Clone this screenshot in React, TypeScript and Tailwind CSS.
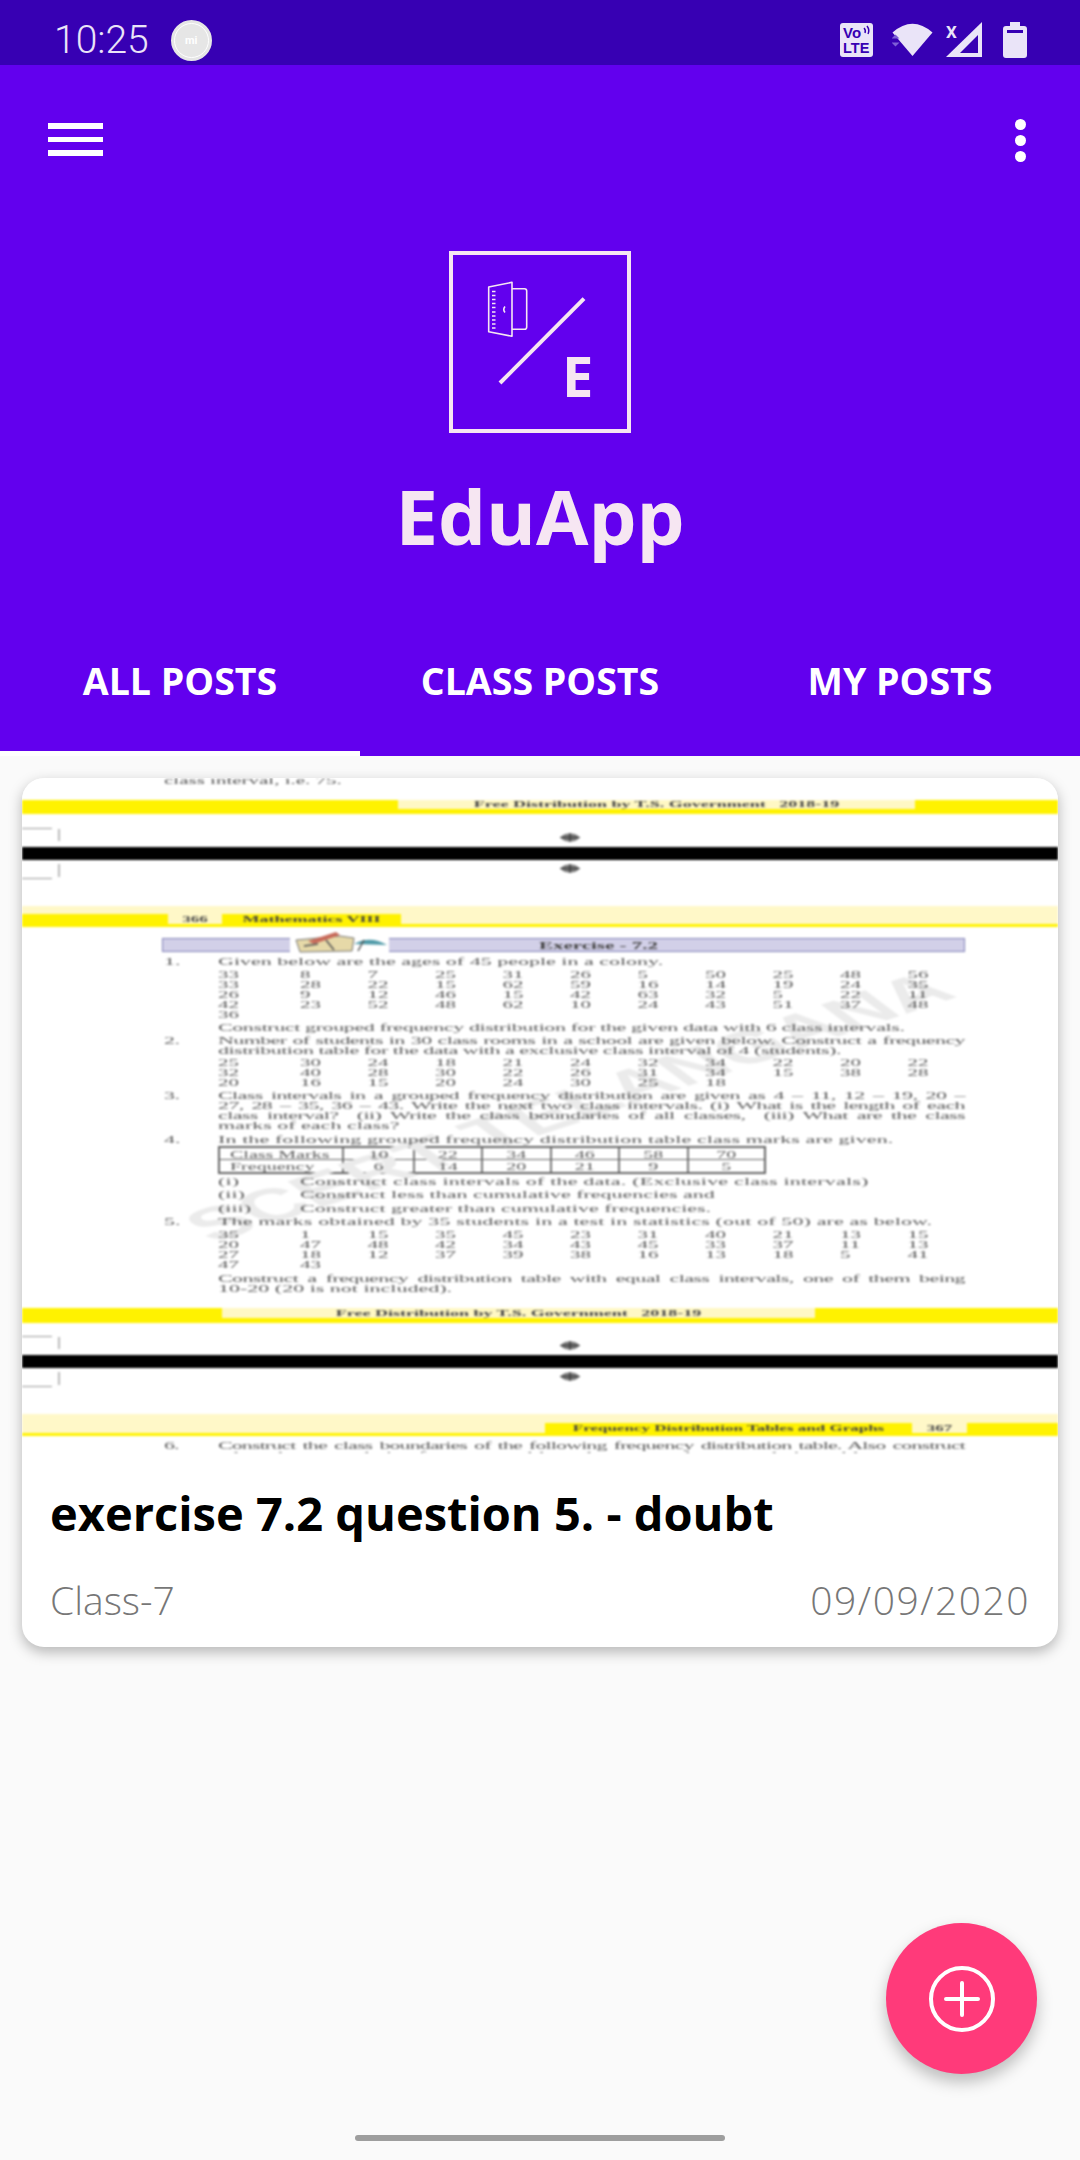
import React from "react";

const Q1 = [
  "33 8 7 25 31 26 5 50 25 48 56",
  "33 28 22 15 62 59 16 14 19 24 35",
  "26 9 12 46 15 42 63 32 5 22 11",
  "42 23 52 48 62 10 24 43 51 37 48",
  "36",
];
const Q2 = [
  "25 30 24 18 21 24 32 34 22 20 22",
  "32 40 28 30 22 26 31 34 15 38 28",
  "20 16 15 20 24 30 25 18",
];
const Q5 = [
  "35 1 15 35 45 23 31 40 21 13 15",
  "20 47 48 42 34 43 45 33 37 11 13",
  "27 18 12 37 39 38 16 13 18 5 41",
  "47 43",
];

function Line({ n, text, justify, cls }: { n?: string; text: string; justify?: boolean; cls?: string }) {
  return (
    <div className={`ml-[142px] w-[801px] h-[10px] flex text-[22px] leading-[10px] text-[#5a5a5a] [transform:scaleY(0.5)] ${cls ?? ""}`}>
      <span className="w-[54px] shrink-0">{n}</span>
      <span className={`w-[747px] whitespace-pre-wrap ${justify ? "[text-align-last:justify]" : ""}`}>{text}</span>
    </div>
  );
}

function Sub({ n, text, cls }: { n: string; text: string; cls: string }) {
  return (
    <div className={`ml-[196px] h-[10px] flex text-[22px] leading-[10px] text-[#5a5a5a] [transform:scaleY(0.5)] ${cls}`}>
      <span className="w-[82px] shrink-0">{n}</span>
      <span>{text}</span>
    </div>
  );
}

function Nums({ rows, cls }: { rows: string[]; cls: string }) {
  return (
    <div className={`ml-[196px] flex flex-col ${cls}`}>
      {rows.map((r, i) => (
        <div key={i} className="h-[10px] grid grid-cols-[82px_repeat(10,67.5px)] text-[21px] leading-[10px] text-[#5a5a5a] [transform:scaleY(0.5)]">
          {r.split(" ").map((v, j) => (
            <span key={j}>{v}</span>
          ))}
        </div>
      ))}
    </div>
  );
}

function Target() {
  return (
    <svg width="24" height="9" viewBox="0 0 24 9" className="block">
      <ellipse cx="12" cy="4.5" rx="9" ry="4" fill="#777" />
      <path d="M2 4.5H22M12 0V9" stroke="#333" strokeWidth="1.2" />
    </svg>
  );
}

function CropTop({ h }: { h: string }) {
  return (
    <div className={`${h} flex items-end`}>
      <div className="w-[30px] h-[19px] border-t border-[#999]" />
      <div className="w-[2px] h-[12px] bg-[#bbb] ml-[6px] mb-[6px]" />
      <div className="ml-[498px] mb-[5px]">
        <Target />
      </div>
    </div>
  );
}

function CropBottom({ h }: { h: string }) {
  return (
    <div className={`${h} flex items-start`}>
      <div className="w-[30px] h-[19px] border-b border-[#999]" />
      <div className="w-[2px] h-[13px] bg-[#bbb] ml-[6px] mt-[4px]" />
      <div className="ml-[498px] mt-[4px]">
        <Target />
      </div>
    </div>
  );
}

const tableCols = ["Class Marks", "10", "22", "34", "46", "58", "70"];
const tableVals = ["Frequency", "6", "14", "20", "21", "9", "5"];

function TableRow({ vals, last }: { vals: string[]; last?: boolean }) {
  return (
    <div className={`flex h-[13px] ${last ? "" : "border-b border-[#666]"}`}>
      {vals.map((v, i) => (
        <div
          key={i}
          className={`h-full flex items-center text-[20px] leading-[10px] text-[#5a5a5a] ${i === 0 ? "w-[125px] pl-[10px]" : i === 1 ? "w-[71px] justify-center" : i === 6 ? "w-[76px] justify-center" : "w-[69px] justify-center"} ${i < 6 ? "border-r-2 border-[#777]" : ""}`}
        >
          <span className="[transform:scaleY(0.5)] whitespace-nowrap">{v}</span>
        </div>
      ))}
    </div>
  );
}

function DocPage() {
  return (
    <div className="relative h-[675px] overflow-hidden bg-white font-['Liberation_Serif',serif] blur-[1px]">
      <div className="absolute left-[546px] top-[329px] w-0 h-0 flex items-center justify-center">
        <span className="whitespace-nowrap text-[90px] leading-none font-bold font-['Liberation_Sans',sans-serif] text-[#ebebeb] [transform:scaleY(0.5)_rotate(-33.5deg)]">
          SCERT TELANGANA
        </span>
      </div>
      <div className="ml-[142px] h-[10px] -mt-[3px] text-[21px] leading-[10px] text-[#555] [transform:scaleY(0.5)]">class interval, i.e. 75.</div>
      <div className="mt-[15px] h-[14px] bg-[#fff200] flex">
        <div className="ml-[376px] w-[517px] h-[9px] bg-[#fff8c4] flex items-center justify-center">
          <span className="text-[18px] leading-[9px] font-bold text-[#444] [transform:scaleY(0.5)] whitespace-nowrap">
            Free Distribution by T.S. Government &nbsp; 2018-19
          </span>
        </div>
      </div>
      <CropTop h="h-[33px]" />
      <div className="h-[13px] bg-black" />
      <div className="h-[46px]">
        <CropBottom h="h-[33px]" />
      </div>
      <div className="h-[18px] bg-[#fff8c8] flex items-end">
        <div className="w-[146px] h-[10px] bg-[#fff200]" />
        <div className="w-[54px] h-[10px] flex items-center justify-center">
          <span className="text-[17px] leading-[10px] font-bold text-[#444] [transform:scaleY(0.5)]">366</span>
        </div>
        <div className="w-[179px] h-[10px] bg-[#fff200] flex items-center justify-center">
          <span className="text-[18px] leading-[10px] font-bold text-[#444] [transform:scaleY(0.5)] whitespace-nowrap">Mathematics VIII</span>
        </div>
      </div>
      <div className="h-[3px] bg-[#fff200]" />
      <div className="relative mt-[11px] ml-[140px] w-[803px] h-[14px] bg-[#d2d0e8] border border-[#8282b8] flex items-center justify-center pl-[70px]">
        <span className="text-[21px] leading-[10px] font-bold text-[#444] [transform:scaleY(0.5)]">Exercise - 7.2</span>
        <svg className="absolute left-[127px] -top-[7px]" width="99" height="22" viewBox="0 0 99 22">
          <rect x="0" y="6" width="99" height="15" fill="#fff" />
          <path d="M6 8L50 4L64 6L62 19L10 20Z" fill="#e6d9a8" stroke="#777" strokeWidth="1" />
          <path d="M18 9L46 0L50 3L24 12Z" fill="#c86a5a" />
          <path d="M64 12Q80 3 97 13Z" fill="#4f9aa8" />
          <path d="M68 19L74 8M36 8L44 18M14 14L28 12" stroke="#555" strokeWidth="1.5" />
        </svg>
      </div>
      <Line cls="mt-[4px]" n="1." text="Given below are the ages of 45 people in a colony." />
      <Nums cls="mt-[3px]" rows={Q1} />
      <Line cls="mt-[3px] tracking-[-0.4px]" text="Construct grouped frequency distribution for the given data with 6 class intervals." />
      <Line cls="mt-[3px] tracking-[-0.6px]" n="2." justify text="Number of students in 30 class rooms in a school are given below. Construct a frequency" />
      <Line cls="tracking-[-0.5px]" text="distribution table for the data with a exclusive class interval of 4 (students)." />
      <Nums cls="mt-[2px]" rows={Q2} />
      <Line cls="mt-[3px] tracking-[-0.6px]" n="3." justify text="Class intervals in a grouped frequency distribution are given as 4 – 11, 12 – 19, 20 –" />
      <Line cls="tracking-[-0.6px]" justify text="27, 28 – 35, 36 – 43. Write the next two class intervals. (i) What is the length of each" />
      <Line cls="tracking-[-0.6px]" justify text="class interval?  (ii) Write the class boundaries of all classes,  (iii) What are the class" />
      <Line text="marks of each class?" />
      <Line cls="mt-[4px] tracking-[0.1px]" n="4." text="In the following grouped frequency distribution table class marks are given." />
      <div className="ml-[196px] mt-[2px] w-[548px] h-[28px] border-2 border-[#666] flex flex-col">
        <TableRow vals={tableCols} />
        <TableRow vals={tableVals} last />
      </div>
      <Sub cls="mt-[2px] tracking-[0.2px]" n="(i)" text="Construct class intervals of the data. (Exclusive class intervals)" />
      <Sub cls="mt-[3px]" n="(ii)" text="Construct less than cumulative frequencies and" />
      <Sub cls="mt-[4px]" n="(iii)" text="Construct greater than cumulative frequencies." />
      <Line cls="mt-[3px] tracking-[0.12px]" n="5." text="The marks obtained by 35 students in a test in statistics (out of 50) are as below." />
      <Nums cls="mt-[3px]" rows={Q5} />
      <Line cls="mt-[4px] tracking-[-0.6px]" justify text="Construct a frequency distribution table with equal class intervals, one of them being" />
      <Line text="10-20 (20 is not included)." />
      <div className="mt-[15px] h-[15px] bg-[#fff200] flex">
        <div className="ml-[200px] w-[593px] h-[10px] bg-[#fff8c4] flex items-center justify-center">
          <span className="text-[18px] leading-[9px] font-bold text-[#444] [transform:scaleY(0.5)] whitespace-nowrap">
            Free Distribution by T.S. Government &nbsp; 2018-19
          </span>
        </div>
      </div>
      <CropTop h="h-[32px]" />
      <div className="h-[13px] bg-black" />
      <div className="h-[46px]">
        <CropBottom h="h-[33px]" />
      </div>
      <div className="h-[19px] bg-[#fff8c8] flex items-end">
        <div className="ml-[523px] w-[367px] h-[10px] bg-[#fff200] flex items-center justify-center">
          <span className="text-[17px] leading-[10px] font-bold text-[#444] [transform:scaleY(0.5)] whitespace-nowrap">Frequency Distribution Tables and Graphs</span>
        </div>
        <div className="w-[55px] h-[10px] flex items-center justify-center">
          <span className="text-[17px] leading-[10px] font-bold text-[#444] [transform:scaleY(0.5)]">367</span>
        </div>
        <div className="flex-1 h-[10px] bg-[#fff200]" />
      </div>
      <div className="h-[3px] bg-[#fff200]" />
      <Line cls="mt-[4px] tracking-[-0.9px]" n="6." justify text="Construct the class boundaries of the following frequency distribution table. Also construct" />
      <Line text="a less than cumulative frequency table and a greater than cumulative table." />
    </div>
  );
}

function StatusIcons() {
  const c = "#EAE4F8";
  return (
    <div className="flex items-center pr-[53px]">
      <svg width="33" height="34" viewBox="0 0 33 34">
        <rect width="33" height="34" rx="3" fill={c} />
        <text x="3" y="15" fontSize="15" fontWeight="700" fontFamily="Liberation Sans, sans-serif" fill="#3700B3">Vo</text>
        <path d="M24 5Q26 7 25 10M27 3Q30 7 28 11" stroke="#3700B3" strokeWidth="1.5" fill="none" />
        <text x="3" y="30" fontSize="14.5" fontWeight="700" fontFamily="Liberation Sans, sans-serif" fill="#3700B3">LTE</text>
      </svg>
      <svg width="41" height="34" viewBox="0 0 41 34" className="ml-[19px]">
        <path d="M0.5 9.5Q20.5 -8 40.5 9.5L20.5 33Z" fill={c} />
        <path d="M0 16l4 -4l4 4ZM0 20h8l-4 4Z" transform="translate(-0.5 -0.5)" fill="#7E5FD6" />
      </svg>
      <svg width="36" height="36" viewBox="0 0 36 36" className="ml-[13px]">
        <path d="M0 35L36 0V35Z" fill={c} />
        <path d="M14 31H32V13Z" fill="#3700B3" />
        <text x="0" y="16" fontSize="17" fontWeight="700" fontFamily="Roboto, sans-serif" fill={c}>X</text>
      </svg>
      <svg width="24" height="36" viewBox="0 0 24 36" className="ml-[21px]">
        <path d="M7 0H17V4H21Q24 4 24 7V33Q24 36 21 36H3Q0 36 0 33V7Q0 4 3 4H7Z" fill={c} />
        <rect x="4" y="8" width="16" height="3" fill="#3700B3" />
      </svg>
    </div>
  );
}

function Logo() {
  const c = "#F6E6F2";
  return (
    <div className="relative w-[182px] h-[182px] border-4 border-[#F6E6F2]">
      <svg width="174" height="174" viewBox="0 0 174 174" className="block">
        <path d="M35.7 32L59 27.3V81.3L35.7 76.7Z" fill="none" stroke={c} strokeWidth="1.6" strokeLinejoin="round" />
        <path d="M59 33.7H71.5Q73.7 33.7 73.7 36V72Q73.7 74.3 71.5 74.3H59" fill="none" stroke={c} strokeWidth="1.6" />
        <path d="M39 36.5H42.5M39 40.5H42.5M39 44.5H42.5M39 48.5H42.5M39 52.5H42.5M39 57H42.5M39 61H42.5M39 65H42.5M39 69H42.5M39 73H42.5" stroke={c} strokeWidth="1.6" />
        <path d="M52 51.5Q49.5 54.5 52 57.5" fill="none" stroke={c} strokeWidth="1.6" />
        <path d="M47 128L131 43.7" stroke={c} strokeWidth="4" />
      </svg>
      <span className="absolute left-[109px] top-[90px] text-[56px] leading-[60px] font-bold text-[#F6E6F2]">E</span>
    </div>
  );
}

export default function App() {
  return (
    <div className="relative w-[1080px] h-[2160px] overflow-hidden bg-[#fafafa] font-['Open_Sans',sans-serif]">
      <div className="h-[65px] pt-[15px] bg-[#3700B3] flex items-center justify-between">
        <div className="flex items-center pl-[54px]">
          <span className="text-[39px] leading-none font-light text-[#EAE4F8] font-['Roboto',sans-serif]">10:25</span>
          <div className="ml-[22px] w-[41px] h-[41px] rounded-full bg-[#E6E6E6] border-2 border-[#E6E6E6] outline outline-1 -outline-offset-4 outline-white flex items-center justify-center">
            <span className="text-[11px] leading-none font-bold text-white font-['Roboto',sans-serif]">mi</span>
          </div>
        </div>
        <StatusIcons />
      </div>

      <header className="h-[691px] bg-[#6200EE] flex flex-col items-center">
        <div className="w-full h-[43px] mt-[54px] flex items-center justify-between pl-[48px] pr-[54px]">
          <div className="w-[55px] flex flex-col gap-[8px] -mt-[2px]">
            <div className="h-[5.5px] bg-white" />
            <div className="h-[5.5px] bg-white" />
            <div className="h-[5.5px] bg-white" />
          </div>
          <div className="flex flex-col gap-[5px]">
            <div className="w-[11px] h-[11px] rounded-full bg-white" />
            <div className="w-[11px] h-[11px] rounded-full bg-white" />
            <div className="w-[11px] h-[11px] rounded-full bg-white" />
          </div>
        </div>
        <div className="mt-[89px]">
          <Logo />
        </div>
        <div className="mt-[33px] text-[76px] leading-[100px] font-bold text-[#F6E6F2]">EduApp</div>
        <nav className="w-full flex mt-[54px] text-[37.5px] leading-[50px] font-bold text-white">
          <div className="flex-1 h-[136px] pt-[36px] text-center border-b-[5px] border-white">ALL POSTS</div>
          <div className="flex-1 h-[136px] pt-[36px] text-center">CLASS POSTS</div>
          <div className="flex-1 h-[136px] pt-[36px] text-center">MY POSTS</div>
        </nav>
      </header>

      <main className="pt-[22px] px-[22px]">
        <article className="h-[869px] rounded-[22px] bg-white overflow-hidden shadow-[0_5px_14px_rgba(0,0,0,0.28)]">
          <DocPage />
          <div className="px-[28px] pt-[30px]">
            <h2 className="text-[47px] leading-[60px] font-bold text-black">exercise 7.2 question 5. - doubt</h2>
            <div className="mt-[32px] flex justify-between text-[39px] leading-[50px] font-light text-[#777]">
              <span>Class-7</span>
              <span className="tracking-[1.5px]">09/09/2020</span>
            </div>
          </div>
        </article>
      </main>

      <button className="absolute left-[886px] top-[1923px] w-[151px] h-[151px] rounded-full bg-[#FF3A7A] flex items-center justify-center shadow-[0_8px_16px_rgba(0,0,0,0.25)]">
        <svg width="68" height="68" viewBox="0 0 68 68" fill="none" stroke="white" strokeWidth="4" strokeLinecap="round">
          <circle cx="34" cy="34" r="31" />
          <path d="M18 34H50M34 18V50" />
        </svg>
      </button>
      <div className="absolute left-[355px] top-[2135px] w-[370px] h-[6px] rounded-full bg-[#9e9e9e]" />
    </div>
  );
}
